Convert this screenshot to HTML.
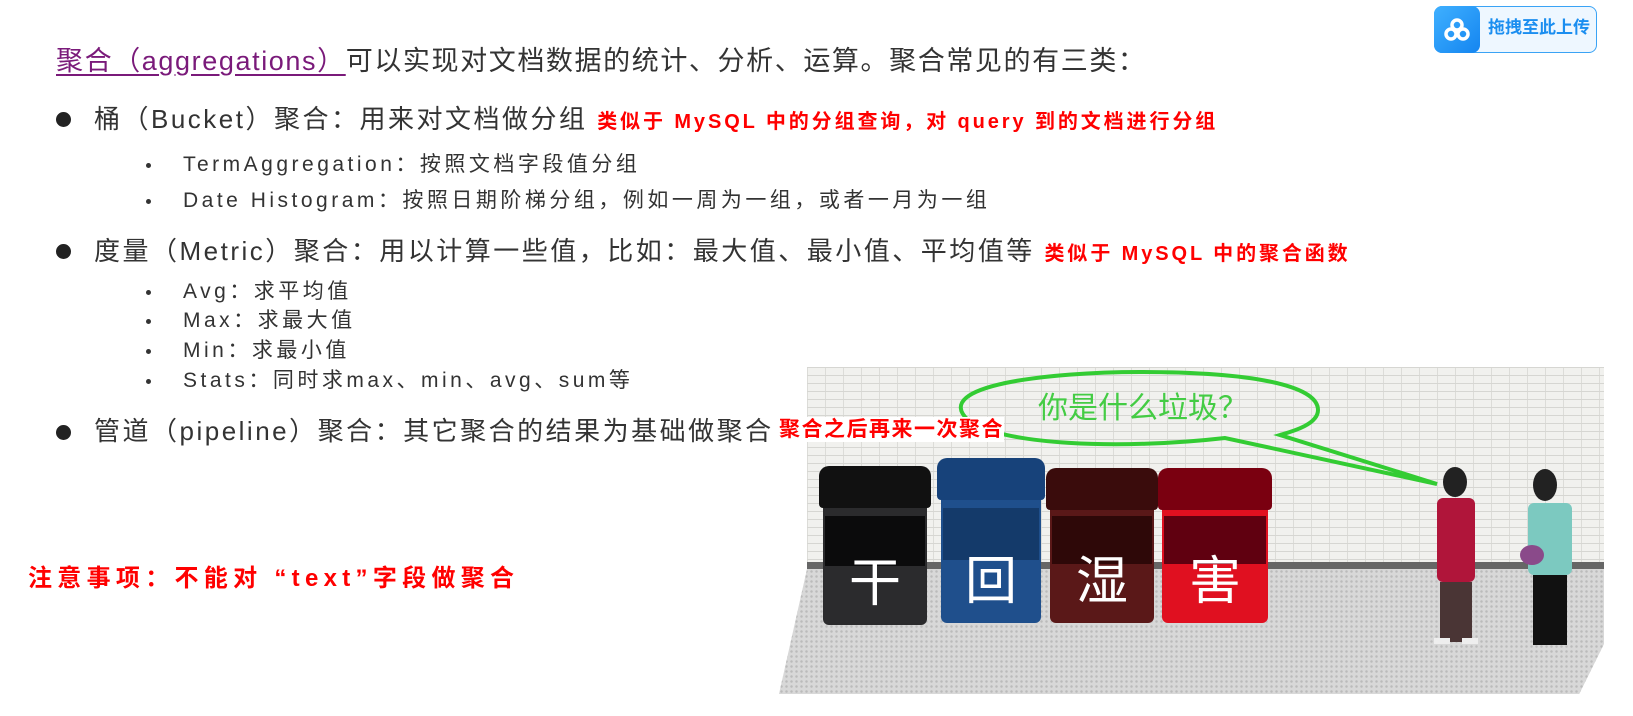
<!DOCTYPE html>
<html><head><meta charset="utf-8"><style>
html,body{margin:0;padding:0;background:#fff;width:1633px;height:716px;overflow:hidden;position:relative}
.t{position:absolute;white-space:nowrap;font-family:"Liberation Sans","Noto Sans CJK SC",sans-serif;color:#333;line-height:1.2}
.l1{font-size:26px;letter-spacing:2.5px}
.l2{font-size:21px;letter-spacing:3.5px}
.r{color:#f00;font-weight:bold;font-size:20px;letter-spacing:2.9px}
.dot{position:absolute;width:15px;height:15px;border-radius:50%;background:#222}
.sd{position:absolute;width:5px;height:5px;border-radius:50%;background:#333}
.bin{position:absolute;border-radius:10px 10px 6px 6px}
.lid{position:absolute;left:-4px;right:-4px;top:0;height:42px;border-radius:10px 10px 4px 4px}
.ch{position:absolute;left:0;right:0;bottom:20px;text-align:center;color:#fff;font-size:52px;line-height:1;font-family:"Noto Sans CJK SC",sans-serif}
</style></head><body>

<div class="t" style="left:56px;top:45px;font-size:27px;letter-spacing:1.6px"><span style="color:#7a1a7a;text-decoration:underline;text-underline-offset:4px">聚合（aggregations）</span>可以实现对文档数据的统计、分析、运算。聚合常见的有三类：</div>

<div class="dot" style="left:56px;top:112px"></div>
<div class="t l1" style="left:94px;top:104px">桶（Bucket）聚合：用来对文档做分组 <span class="r">类似于 MySQL 中的分组查询，对 query 到的文档进行分组</span></div>
<div class="sd" style="left:146px;top:163px"></div>
<div class="t l2" style="left:183px;top:152px">TermAggregation：按照文档字段值分组</div>
<div class="sd" style="left:146px;top:199px"></div>
<div class="t l2" style="left:183px;top:188px">Date Histogram：按照日期阶梯分组，例如一周为一组，或者一月为一组</div>

<div class="dot" style="left:56px;top:244px"></div>
<div class="t l1" style="left:94px;top:236px">度量（Metric）聚合：用以计算一些值，比如：最大值、最小值、平均值等 <span class="r">类似于 MySQL 中的聚合函数</span></div>
<div class="sd" style="left:146px;top:290px"></div>
<div class="t l2" style="left:183px;top:279px">Avg：求平均值</div>
<div class="sd" style="left:146px;top:319px"></div>
<div class="t l2" style="left:183px;top:308px">Max：求最大值</div>
<div class="sd" style="left:146px;top:349px"></div>
<div class="t l2" style="left:183px;top:338px">Min：求最小值</div>
<div class="sd" style="left:146px;top:379px"></div>
<div class="t l2" style="left:183px;top:368px">Stats：同时求max、min、avg、sum等</div>

<!-- picture -->
<div style="position:absolute;left:807px;top:367px;width:797px;height:201px;background-color:#f1f1ee;background-image:repeating-linear-gradient(0deg,#d6d6d2 0 1px,transparent 1px 8px),repeating-linear-gradient(90deg,#dcdcd8 0 1px,transparent 1px 18px)"></div>
<div style="position:absolute;left:807px;top:562px;width:797px;height:7px;background:#666"></div>
<div style="position:absolute;left:779px;top:569px;width:825px;height:125px;background:#d8d8d8;clip-path:polygon(28px 0,100% 0,100% 60%,97% 100%,0 100%);background-image:radial-gradient(#bbb 1px,transparent 1.5px);background-size:5px 5px"></div>

<div class="bin" style="left:823px;top:466px;width:104px;height:159px;background:#2b2b2d"><div class="lid" style="background:#111"></div><div style="position:absolute;left:2px;right:2px;top:50px;height:50px;background:#0b0b0c"></div><div class="ch">干</div></div>
<div class="bin" style="left:941px;top:458px;width:100px;height:165px;background:#1f4f8c"><div class="lid" style="background:#17427a"></div><div style="position:absolute;left:2px;right:2px;top:50px;height:52px;background:#143a6a"></div><div class="ch">回</div></div>
<div class="bin" style="left:1050px;top:468px;width:104px;height:155px;background:#5a1818"><div class="lid" style="background:#3a0c0c"></div><div style="position:absolute;left:2px;right:2px;top:48px;height:48px;background:#2e0808"></div><div class="ch">湿</div></div>
<div class="bin" style="left:1162px;top:468px;width:106px;height:155px;background:#e01020"><div class="lid" style="background:#7a0010"></div><div style="position:absolute;left:2px;right:2px;top:48px;height:48px;background:#600010"></div><div class="ch">害</div></div>

<svg style="position:absolute;left:0;top:0" width="1633" height="716">
<path d="M968 420 C 930 385, 1050 372, 1140 372 C 1250 372, 1318 385, 1318 410 C 1318 425, 1290 432, 1280 435 L 1437 484 L 1225 438 C 1120 450, 1000 445, 968 420 Z" fill="none" stroke="#3c3" stroke-width="4"/>
<text x="1038" y="418" font-family="Noto Sans CJK SC,sans-serif" font-size="30" fill="#4c4">你是什么垃圾？</text>
<ellipse cx="1455" cy="482" rx="12" ry="15" fill="#222"/>
<rect x="1437" y="498" width="38" height="84" rx="6" fill="#b0153a"/>
<rect x="1440" y="582" width="32" height="60" fill="#4a3535"/>
<rect x="1434" y="638" width="16" height="6" fill="#eee"/><rect x="1462" y="638" width="16" height="6" fill="#eee"/>
<ellipse cx="1545" cy="485" rx="12" ry="16" fill="#222"/>
<rect x="1528" y="503" width="44" height="72" rx="6" fill="#7cc9c0"/>
<rect x="1533" y="575" width="34" height="70" fill="#111"/>
<ellipse cx="1532" cy="555" rx="12" ry="10" fill="#8a4a8a"/>
</svg>

<div class="t l1" style="left:94px;top:416px">管道（pipeline）聚合：其它聚合的结果为基础做聚合</div>
<div class="dot" style="left:56px;top:425px"></div>
<div class="t" style="left:779px;top:417px;color:#f00;font-weight:bold;font-size:21px;letter-spacing:1.5px;background:#fff">聚合之后再来一次聚合</div>

<div class="t" style="left:28px;top:565px;color:#f00;font-weight:bold;font-size:24px;letter-spacing:5.3px">注意事项：不能对 “text”字段做聚合</div>

<!-- upload button -->
<div style="position:absolute;left:1434px;top:6px;width:161px;height:45px;border:1px solid #3aa3f5;border-radius:8px;background:#eef7ff"></div>
<div style="position:absolute;left:1434px;top:6px;width:46px;height:47px;border-radius:8px;background:linear-gradient(135deg,#3fb0ff,#1485f0)"></div>
<svg style="position:absolute;left:1442px;top:16px" width="30" height="28"><circle cx="15" cy="9" r="5" fill="none" stroke="#fff" stroke-width="3.5"/><circle cx="9" cy="18" r="5" fill="none" stroke="#fff" stroke-width="3.5"/><circle cx="21" cy="18" r="5" fill="none" stroke="#fff" stroke-width="3.5"/></svg>
<div class="t" style="left:1488px;top:18px;color:#1b8ef0;font-weight:bold;font-size:17px">拖拽至此上传</div>
</body></html>
